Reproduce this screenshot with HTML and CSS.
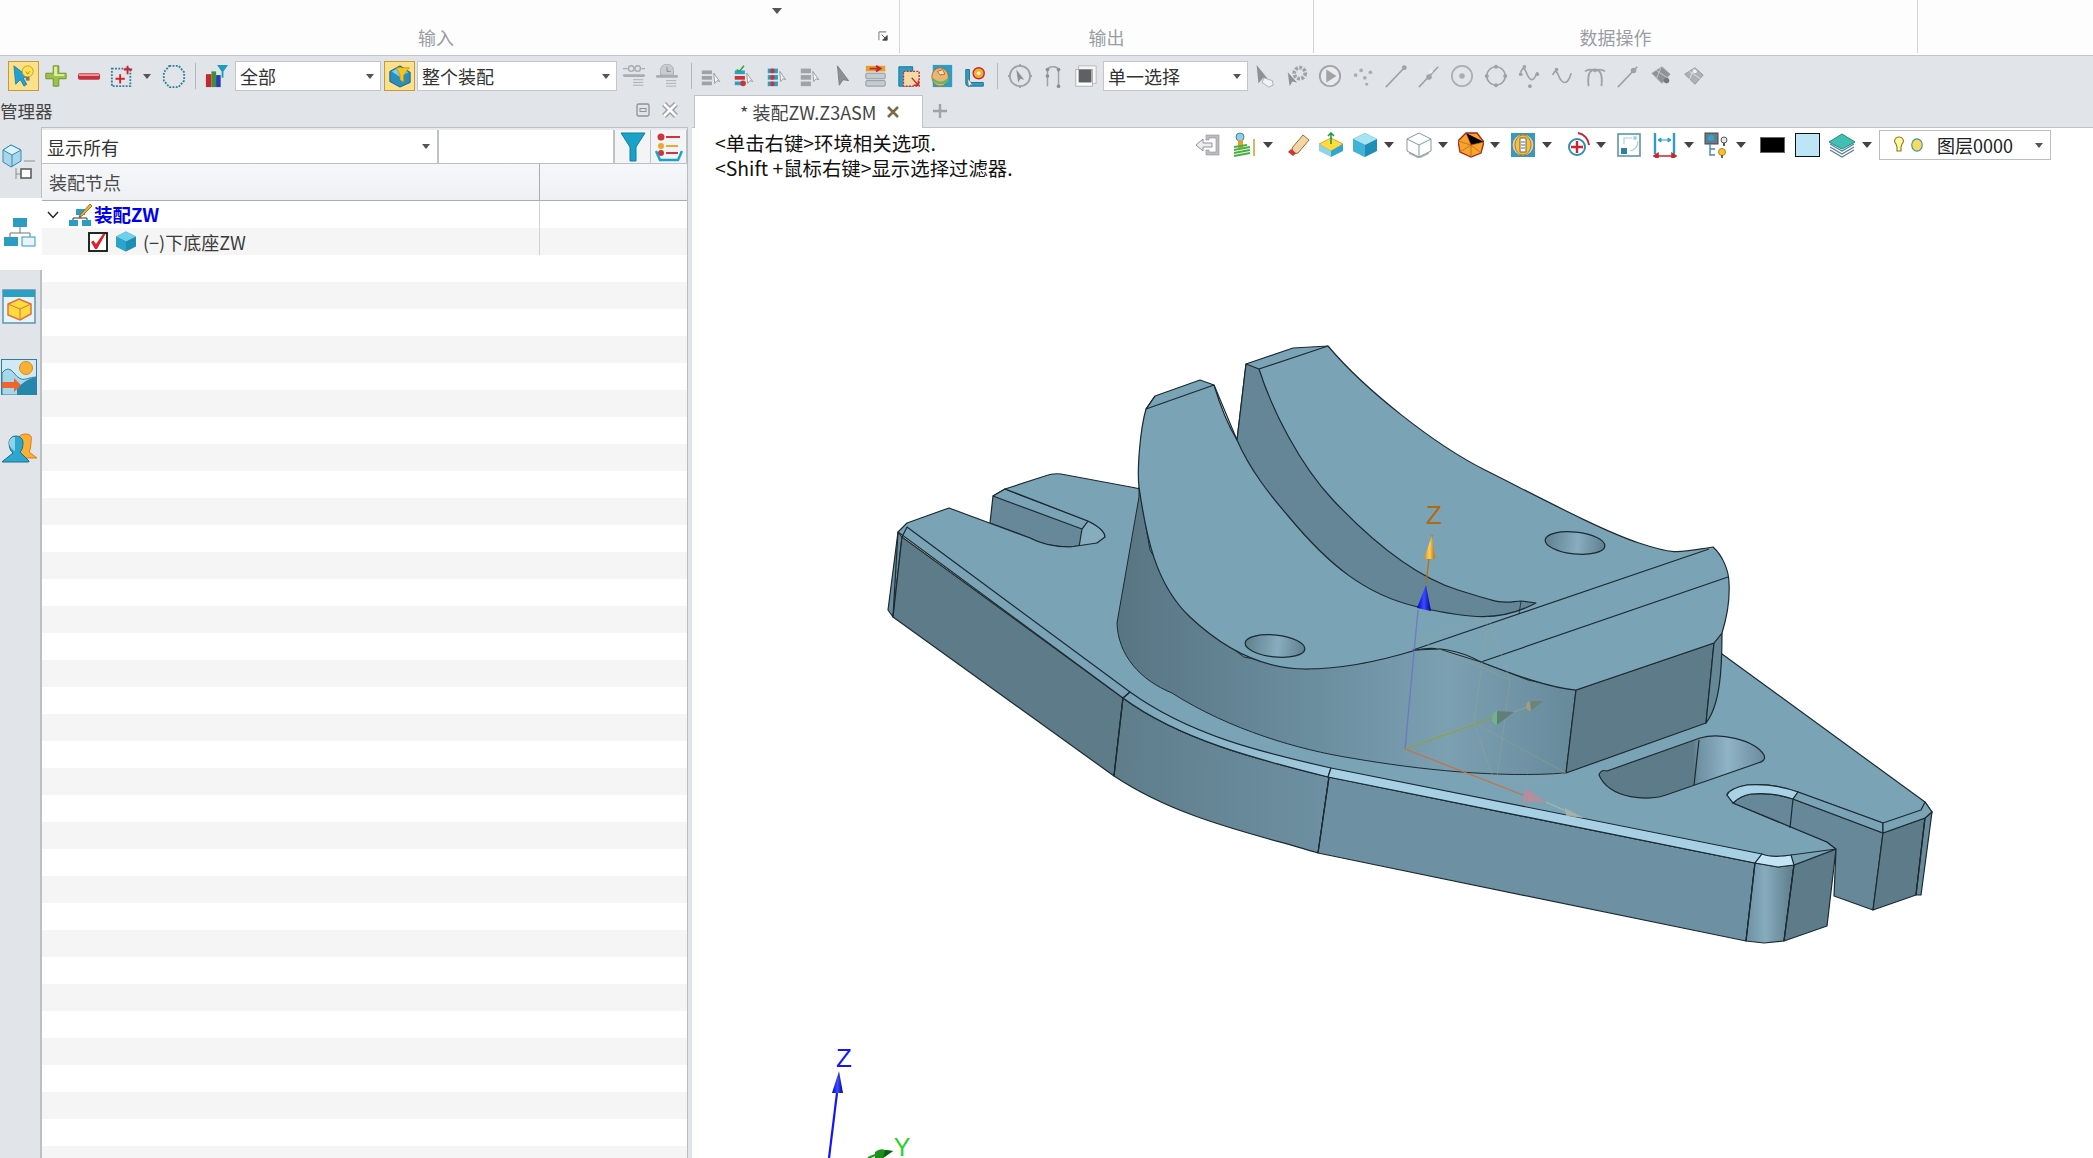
FILE: index.html
```html
<!DOCTYPE html>
<html lang="zh">
<head>
<meta charset="utf-8">
<title>装配ZW</title>
<link rel="stylesheet" href="styles.css">
</head>
<body>
<div class="app">
  <header class="ribbon">
    <section class="rb rb-in"><span class="rb-caret"></span><span class="rb-label">输入</span>
      <svg class="launcher" viewBox="0 0 12 12"><path d="M1 1h8M1 1v9" fill="none" stroke="#888" stroke-width="1.2"/><path d="M4 4l5 5M10 5v5H5z" fill="#444" stroke="#444"/></svg>
    </section>
    <section class="rb rb-out"><span class="rb-label">输出</span></section>
    <section class="rb rb-data"><span class="rb-label">数据操作</span></section>
  </header>

  <nav class="toolbar">
    <span class="hl"><svg class="ic" viewBox="0 0 26 26"><path d="M2 2l2 20 5-5 4 7 3-2-4-7 6-1z" fill="#1fa2d8" stroke="#0e6d99" stroke-width=".7"/><circle cx="17" cy="8" r="6" fill="#ffe25a" stroke="#c99a10"/><path d="M15 14h4v4h-4z" fill="#777"/><path d="M15 8l2 3 2-3" fill="none" stroke="#c27b12"/></svg></span>
    <span class="ti"><svg class="ic" viewBox="0 0 26 26"><path d="M10 2h6v8h8v6h-8v8h-6v-8H2v-6h8z" fill="#9cc24c" stroke="#6e8f2b" stroke-linejoin="round"/><path d="M11 3h3v8h8v2H11z" fill="#e3ef9f"/></svg></span>
    <span class="ti"><svg class="ic" viewBox="0 0 26 26"><rect x="1" y="10" width="24" height="7" rx="2" fill="#c3323c"/><rect x="2" y="11" width="22" height="2" fill="#ef9aa0"/></svg></span>
    <span class="ti"><svg class="ic" viewBox="0 0 26 26"><rect x="2" y="5" width="20" height="19" fill="none" stroke="#2b7f9e" stroke-width="2" stroke-dasharray="2 1.5"/><path d="M11 11v10M6 16h10M19 2v9M15 6h9" stroke="#d0222c" stroke-width="2"/></svg></span>
    <span class="tc"></span>
    <span class="ti ti-w"><svg class="ic" viewBox="0 0 26 26"><path d="M8 2h10l6 7v9l-6 7H8l-6-7V9z" fill="none" stroke="#2b7f9e" stroke-width="2" stroke-dasharray="2 1.5"/></svg></span>
    <span class="sep"></span>
    <span class="ti"><svg class="ic" viewBox="0 0 26 26"><rect x="1" y="11" width="6" height="14" fill="#c9252c"/><rect x="7" y="8" width="5" height="17" fill="#3e8f3c"/><rect x="12" y="12" width="5" height="13" fill="#2a3fb0"/><path d="M13 1h12l-5 7v7h-2V8z" fill="#1d9cc0"/></svg></span>
    <div class="combo c-all"><span>全部</span><i class="arr"></i></div>
    <span class="hl hl2"><svg class="ic" viewBox="0 0 26 26"><path d="M13 2l11 7v11l-11 5L2 19V8z" fill="#2a8fbd" stroke="#135f82"/><path d="M4 8l9-5 9 6-9 5z" fill="#7fd0ea"/><path d="M9 4h14l-6 8v8l-4-3v-5z" fill="#f7c61c" stroke="#b8860b" stroke-width=".7"/></svg></span>
    <div class="combo c-asm"><span>整个装配</span><i class="arr"></i></div>
    <span class="ti g"><svg class="ic" viewBox="0 0 26 26"><g fill="none" stroke="#a9adb1" stroke-width="1.6"><circle cx="10" cy="5" r="3"/><circle cx="17" cy="5" r="3"/><path d="M1 5h5M21 5h4"/></g><rect x="1" y="11" width="24" height="3" rx="1.5" fill="#a9adb1"/><path d="M12 17h11M12 20h11M12 23h11" stroke="#a9adb1"/></svg></span>
    <span class="ti g"><svg class="ic" viewBox="0 0 26 26"><path d="M6 12V7a7 7 0 0 1 14 0v5z" fill="#c9ccd0" stroke="#a9adb1"/><path d="M13 3v5h4" fill="none" stroke="#888"/><rect x="1" y="12" width="24" height="3" rx="1.5" fill="#a9adb1"/><path d="M12 18h11M12 21h11M12 24h11" stroke="#a9adb1"/></svg></span>
    <span class="sep sep-b"></span>
    <span class="ti"><svg class="ic" viewBox="0 0 26 26"><g fill="#9fa3a7"><rect x="3" y="7" width="11" height="4"/><rect x="3" y="13" width="11" height="4"/><rect x="3" y="19" width="11" height="4"/></g><path d="M16 10l1 11 2.500-3 3 1z" fill="#f4f5f6" stroke="#888" stroke-width=".8"/></svg></span>
    <span class="ti"><svg class="ic" viewBox="0 0 26 26"><rect x="3" y="7" width="11" height="4" fill="#2e9fc4"/><rect x="3" y="13" width="11" height="4" fill="#c9343b"/><rect x="3" y="19" width="11" height="4" fill="#2e9fc4"/><path d="M5 6l3 2 5-6" fill="none" stroke="#2f9e3e" stroke-width="1.600"/><circle cx="12" cy="21" r="3" fill="#c9343b"/><path d="M16 10l1 11 2.500-3 3 1z" fill="#f4f5f6" stroke="#888" stroke-width=".8"/></svg></span>
    <span class="ti"><svg class="ic" viewBox="0 0 26 26"><rect x="3" y="5" width="11" height="5" fill="#2e9fc4"/><rect x="3" y="12" width="11" height="5" fill="#2e9fc4"/><rect x="3" y="19" width="11" height="5" fill="#2e9fc4"/><circle cx="8" cy="7.500" r="2.500" fill="#c9343b"/><circle cx="8" cy="14.500" r="2.500" fill="#c9343b"/><circle cx="8" cy="21.500" r="2.500" fill="#c9343b"/><path d="M16 8l1 11 2.500-3 3 1z" fill="#f4f5f6" stroke="#888" stroke-width=".8"/></svg></span>
    <span class="ti"><svg class="ic" viewBox="0 0 26 26"><g fill="#9fa3a7"><rect x="3" y="5" width="11" height="5"/><rect x="3" y="12" width="11" height="5"/><rect x="3" y="19" width="11" height="5"/></g><path d="M16 8l1 11 2.500-3 3 1z" fill="#f4f5f6" stroke="#888" stroke-width=".8"/></svg></span>
    <span class="ti"><svg class="ic" viewBox="0 0 26 26"><path d="M7 2l2 21 4-6 6 1z" fill="#8d9195" stroke="#7b7f83"/></svg></span>
    <span class="ti"><svg class="ic" viewBox="0 0 26 26"><rect x="2" y="2" width="21" height="6" fill="#e2a12e"/><path d="M6 5h10M13 2l5 3-5 3" stroke="#c9252c" stroke-width="2" fill="none"/><rect x="2" y="10" width="21" height="6" rx="1" fill="#c4ccd0" stroke="#8c979c"/><rect x="2" y="18" width="21" height="6" rx="1" fill="#c4ccd0" stroke="#8c979c"/></svg></span>
    <span class="ti"><svg class="ic" viewBox="0 0 26 26"><path d="M2 3h15v21H2z" fill="#2c9ec6" stroke="#15708f"/><rect x="7" y="8" width="17" height="16" fill="#f2d9a6" stroke="#c9252c" stroke-dasharray="2 1.500" stroke-width="1.500"/><path d="M16 15l7 8M23 23v-5M23 23h-5" stroke="#c9252c" stroke-width="1.500" fill="none"/></svg></span>
    <span class="ti"><svg class="ic" viewBox="0 0 26 26"><rect x="3" y="1" width="21" height="24" fill="#2c9ec6"/><ellipse cx="11" cy="14" rx="9" ry="10" fill="#e9b676" stroke="#b4681f"/><path d="M3 15q8 8 17 0v4q-8 6-17 0z" fill="#62b86c"/><path d="M8 8l6-2 2 5-5 1z" fill="#f3e0bd" stroke="#b4681f"/></svg></span>
    <span class="ti"><svg class="ic" viewBox="0 0 26 26"><path d="M3 6h4v14h15v4H6q-3 0-3-3z" fill="#2c9ec6" stroke="#15708f"/><circle cx="17" cy="10" r="6" fill="#f0b133" stroke="#c9252c" stroke-width="1.500"/><circle cx="17" cy="10" r="2" fill="#fff3c4"/><path d="M5 15l1 10 2-2.500 2.500.5z" fill="#fff" stroke="#666" stroke-width=".7"/></svg></span>
    <span class="sep sep-c"></span>
    <span class="ti"><svg class="ic" viewBox="0 0 26 26"><circle cx="13" cy="13" r="11" fill="none" stroke="#9fa3a7" stroke-width="2"/><path d="M9 6l2 14 2.500-4 4 1z" fill="#8d9195"/><path d="M13 0v3M13 23v3M0 13h3M23 13h3" stroke="#9fa3a7" stroke-width="2"/></svg></span>
    <span class="ti"><svg class="ic" viewBox="0 0 26 26"><path d="M7 24V8q0-5 6-5t6 5v16" fill="none" stroke="#9fa3a7" stroke-width="1.600"/><g fill="#8d9195"><circle cx="7" cy="6" r="2"/><circle cx="19" cy="6" r="2"/><circle cx="19" cy="24" r="2"/><circle cx="7" cy="13" r="2"/></g></svg></span>
    <span class="ti"><svg class="ic" viewBox="0 0 26 26"><rect x="5" y="2" width="19" height="19" fill="#f4f5f6" stroke="#b5b8bb"/><rect x="2" y="6" width="18" height="18" fill="#fff" stroke="#a9adb1"/><rect x="5" y="6" width="14" height="14" fill="#5e6063"/></svg></span>
    <div class="combo c-sel"><span>单一选择</span><i class="arr"></i></div>
    <div class="tgroup">
      <span class="ti"><svg class="ic" viewBox="0 0 26 26"><path d="M5 1l2 20 5-6 5 1z" fill="#8d9195"/><path d="M13 15l9 3 1 5-5 2-7-5z" fill="#f1f2f3" stroke="#a9adb1"/></svg></span>
      <span class="ti"><svg class="ic" viewBox="0 0 26 26"><circle cx="16" cy="10" r="6" fill="none" stroke="#9fa3a7" stroke-width="4" stroke-dasharray="3 1.500"/><path d="M3 9l2 15 3-5 5 1z" fill="#8d9195"/></svg></span>
      <span class="ti"><svg class="ic" viewBox="0 0 26 26"><circle cx="13" cy="13" r="11" fill="#e8eaec" stroke="#9fa3a7" stroke-width="2"/><path d="M9 6v14l11-7z" fill="#9fa3a7"/></svg></span>
      <span class="ti"><svg class="ic" viewBox="0 0 26 26"><g fill="#a9adb1"><circle cx="5" cy="12" r="2"/><circle cx="11" cy="7" r="2"/><circle cx="15" cy="15" r="2"/><circle cx="21" cy="9" r="2"/><circle cx="17" cy="22" r="1.600"/></g></svg></span>
      <span class="ti"><svg class="ic" viewBox="0 0 26 26"><path d="M2 25L23 3" stroke="#9fa3a7" stroke-width="1.800"/><circle cx="22" cy="4" r="2.600" fill="#9fa3a7"/></svg></span>
      <span class="ti"><svg class="ic" viewBox="0 0 26 26"><path d="M2 25L23 3" stroke="#9fa3a7" stroke-width="1.800"/><circle cx="13" cy="14" r="3" fill="#9fa3a7"/><circle cx="15" cy="8" r="2" fill="#eee"/></svg></span>
      <span class="ti"><svg class="ic" viewBox="0 0 26 26"><circle cx="13" cy="13" r="11" fill="none" stroke="#a9adb1" stroke-width="1.800"/><circle cx="13" cy="13" r="3" fill="#a9adb1"/></svg></span>
      <span class="ti"><svg class="ic" viewBox="0 0 26 26"><circle cx="13" cy="13" r="10" fill="none" stroke="#9fa3a7" stroke-width="1.800"/><g fill="#9fa3a7"><circle cx="13" cy="3" r="2.200"/><circle cx="13" cy="23" r="2.200"/><circle cx="3" cy="13" r="2.200"/><circle cx="23" cy="13" r="2.200"/></g></svg></span>
      <span class="ti"><svg class="ic" viewBox="0 0 26 26"><path d="M4 9q3-8 6 0t6 8 6-8" fill="none" stroke="#9fa3a7" stroke-width="1.800"/><g fill="#9fa3a7"><circle cx="4" cy="11" r="2"/><circle cx="8" cy="3" r="2"/><circle cx="22" cy="11" r="2"/><circle cx="14" cy="24" r="2"/></g></svg></span>
      <span class="ti"><svg class="ic" viewBox="0 0 26 26"><path d="M3 12q3-8 6 0t7 8 7-10" fill="none" stroke="#9fa3a7" stroke-width="1.800"/><circle cx="7" cy="6" r="2" fill="#9fa3a7"/></svg></span>
      <span class="ti"><svg class="ic" viewBox="0 0 26 26"><path d="M6 24Q4 6 13 6t7 18" fill="none" stroke="#9fa3a7" stroke-width="2"/><path d="M2 8q6-4 11 0 5-4 11 0" fill="none" stroke="#9fa3a7" stroke-width="1.800"/></svg></span>
      <span class="ti"><svg class="ic" viewBox="0 0 26 26"><path d="M2 25L23 3" stroke="#9fa3a7" stroke-width="1.800"/><circle cx="19" cy="7" r="3" fill="#9fa3a7"/></svg></span>
      <span class="ti"><svg class="ic" viewBox="0 0 26 26"><path d="M3 10l11-7 9 8-9 10z" fill="#8f9396" stroke="#a9adb1"/><path d="M8 7l12 8M13 4l-5 12" stroke="#ccc"/><circle cx="19" cy="18" r="3" fill="#777"/></svg></span>
      <span class="ti"><svg class="ic" viewBox="0 0 26 26"><path d="M3 11l11-7 9 8-9 10z" fill="#aeb2b5" stroke="#93979a"/><path d="M8 8l12 8M13 5l-5 12" stroke="#e2e2e2"/><circle cx="14" cy="8" r="2" fill="#f1f1f1"/></svg></span>
    </div>
  </nav>

  <div class="main">
    <aside class="manager">
      <div class="m-head"><span class="m-title">管理器</span>
        <svg class="m-btn" viewBox="0 0 14 14"><rect x="1" y="1" width="12" height="12" rx="1.500" fill="none" stroke="#8e9297" stroke-width="1.300"/><rect x="4" y="5.500" width="6" height="3" fill="none" stroke="#8e9297"/></svg>
        <svg class="m-x" viewBox="0 0 18 18"><path d="M3 3l12 12M15 3L3 15" stroke="#9a9ea3" stroke-width="5.500"/><path d="M3 3l12 12M15 3L3 15" stroke="#fff" stroke-width="2.600"/></svg>
      </div>
      <div class="m-body">
        <div class="sidetabs">
          <button class="st st1"><svg viewBox="0 0 34 36" width="34" height="36"><path d="M9 2l10 5v11l-10 6-8-5V7z" fill="#a9d6ea" stroke="#2e8fb5"/><path d="M9 2l10 5-9 5-9-5z" fill="#dff1f8" stroke="#2e8fb5"/><path d="M10 12v12" stroke="#2e8fb5"/><path d="M22 18h11M14 25v12M14 31h5" fill="none" stroke="#8a8f94"/><rect x="19" y="26" width="10" height="9" fill="#fff" stroke="#555" stroke-width="1.500"/></svg></button>
          <button class="st st2"><svg viewBox="0 0 32 30" width="32" height="30"><rect x="9" y="1" width="14" height="9" fill="#2b9cc2"/><path d="M16 10v6M6 20v-4h20v4" fill="none" stroke="#6e7276"/><rect x="0" y="20" width="14" height="9" fill="#2b9cc2"/><rect x="18" y="20" width="13" height="9" fill="#e9f5fa" stroke="#2b9cc2"/></svg></button>
          <button class="st st3"><svg viewBox="0 0 34 35" width="34" height="35"><rect x="1" y="1" width="32" height="33" fill="#e4f4fb" stroke="#5d95b0" stroke-width="1.500"/><rect x="1" y="1" width="32" height="7" fill="#2d9dc4"/><path d="M17 10l12 5v10l-11 6-12-5V15z" fill="#ffdc3e" stroke="#e2703b" stroke-width="1.500"/><path d="M6 15l12 5 11-5M18 20v11" fill="none" stroke="#e2703b"/></svg></button>
          <button class="st st4"><svg viewBox="0 0 36 36" width="36" height="36"><rect x="0.500" y="0.500" width="35" height="35" fill="#cfeaf5" stroke="#2c7fa0"/><circle cx="25" cy="9" r="6.500" fill="#f8b133" stroke="#d98a1b"/><path d="M1 14q6-8 12 0t12 6 10-2v18H1z" fill="#a5d8ea" stroke="#3f7f9c"/><path d="M16 30q8-10 19-12v18H16z" fill="#2487ab"/><path d="M1 23h12v-4l7 7-7 7v-4H1z" fill="#f0642e"/></svg></button>
          <button class="st st5"><svg viewBox="0 0 36 30" width="36" height="30"><path d="M17 6q1-5 8-5t5 8q0 7-2 10l8 6H18z" fill="#f8b133" stroke="#e07a1e"/><path d="M8 9q1-6 7-6t7 6q0 8-3 10l9 9q1 1-2 1H2q-2 0 0-1l10-8q-4-3-4-11z" fill="#2da7cf" stroke="#1c6e8d"/><path d="M8 9q1-5 6-5v14q-6-3-6-9z" fill="#8fd3e9"/></svg></button>
        </div>
        <div class="panel">
          <div class="p-filter">
            <div class="f-combo"><span>显示所有</span><i class="arr"></i></div>
            <div class="f-input"></div>
            <div class="f-btn"><svg viewBox="0 0 26 30" width="26" height="30"><path d="M1 1h24L16 15v14h-6V15z" fill="#1aa3c8" stroke="#0f7f9f"/></svg></div>
            <div class="f-btn"><svg viewBox="0 0 28 30" width="28" height="30"><circle cx="6" cy="5" r="3.500" fill="#d0343c"/><path d="M11 5h14" stroke="#d0343c" stroke-width="2"/><circle cx="6" cy="14" r="3" fill="#eda92b"/><path d="M11 14h12" stroke="#eda92b" stroke-width="2"/><circle cx="6" cy="21" r="3" fill="#d0343c"/><path d="M11 21h12" stroke="#d0343c" stroke-width="2"/><path d="M1 19l4 9h18l4-9" fill="none" stroke="#1aa3c8" stroke-width="2.500"/></svg></div>
          </div>
          <div class="p-head"><div class="col-a">装配节点</div><div class="col-b"></div></div>
          <div class="tree">
            <div class="row">
              <div class="col-a r1">
                <svg class="chev" viewBox="0 0 12 8"><path d="M1 1l5 5.500L11 1" fill="none" stroke="#222" stroke-width="1.400"/></svg>
                <svg class="ti-asm" viewBox="0 0 24 24"><rect x="8" y="6" width="9" height="6" fill="#2b9cc2"/><rect x="1" y="17" width="9" height="6" fill="#2b9cc2"/><rect x="14" y="17" width="9" height="6" fill="#2b9cc2"/><path d="M12 12v3M5 17v-2h14v2" fill="none" stroke="#333"/><path d="M22 1l-9 10-2 3 3-1 10-10z" fill="#f0b133" stroke="#8a5a12" stroke-width=".8"/></svg>
                <b class="n-root">装配ZW</b>
              </div><div class="col-b"></div>
            </div>
            <div class="row">
              <div class="col-a r2">
                <svg class="chk" viewBox="0 0 20 20"><rect x="1" y="1" width="18" height="18" fill="#fff" stroke="#111" stroke-width="1.800"/><path d="M3 10l2.500-1.500L8 12l7-10h2.500L9 17H7z" fill="#e01f26"/></svg>
                <svg class="cube" viewBox="0 0 22 22"><path d="M11 1l10 5v10l-10 5L1 16V6z" fill="#1f8db4"/><path d="M11 1l10 5-10 5L1 6z" fill="#6fd0ec"/><path d="M1 6l10 5v10L1 16z" fill="#2ba5cc"/></svg>
                <span class="n-child">(−)下底座ZW</span>
              </div><div class="col-b"></div>
            </div>
          </div>
        </div>
      </div>
    </aside>

    <main class="view">
      <div class="tabbar">
        <div class="tab"><span>* 装配ZW.Z3ASM</span><svg class="tab-x" viewBox="0 0 14 14"><path d="M2 2l10 10M12 2L2 12" stroke="#7a6a4a" stroke-width="2.600"/></svg></div>
        <svg class="tab-add" viewBox="0 0 16 16"><path d="M8 1v14M1 8h14" stroke="#a0a4a8" stroke-width="2.400"/></svg>
      </div>
      <div class="canvas">
        <svg class="model" viewBox="692 128 1401 1030" width="1401" height="1030">
          <defs>
            <linearGradient id="gWall" x1="1117" x2="1576" y1="0" y2="0" gradientUnits="userSpaceOnUse"><stop offset="0" stop-color="#587583"/><stop offset=".45" stop-color="#6c8fa0"/><stop offset=".72" stop-color="#7ba0b2"/><stop offset="1" stop-color="#678a9b"/></linearGradient>
            <linearGradient id="gFace2" x1="1114" x2="1329" y1="0" y2="0" gradientUnits="userSpaceOnUse"><stop offset="0" stop-color="#5f7d8b"/><stop offset="1" stop-color="#6d90a2"/></linearGradient>
            <linearGradient id="gBand" x1="1130" x2="1340" y1="0" y2="0" gradientUnits="userSpaceOnUse"><stop offset="0" stop-color="#7ba3b6"/><stop offset="1" stop-color="#a8d0e4"/></linearGradient>
            <linearGradient id="gFil" x1="1746" x2="1794" y1="0" y2="0" gradientUnits="userSpaceOnUse"><stop offset="0" stop-color="#6d90a2"/><stop offset=".4" stop-color="#86acbe"/><stop offset="1" stop-color="#5e7b89"/></linearGradient>
            <linearGradient id="gHole"><stop offset="0" stop-color="#60808f"/><stop offset=".55" stop-color="#88adbe"/><stop offset="1" stop-color="#5f7f8e"/></linearGradient>
            <linearGradient id="gSlot" x1="1599" x2="1764" y1="0" y2="0" gradientUnits="userSpaceOnUse"><stop offset="0" stop-color="#5e7b89"/><stop offset=".57" stop-color="#5e7b89"/><stop offset=".6" stop-color="#6d90a2"/><stop offset=".78" stop-color="#8fb4c6"/><stop offset="1" stop-color="#6a8d9e"/></linearGradient>
            <linearGradient id="gArrow" x1="0" x2="1" y1="0" y2="0"><stop offset="0" stop-color="#d88a10"/><stop offset=".5" stop-color="#ffd060"/><stop offset="1" stop-color="#b87008"/></linearGradient>
            <linearGradient id="gBlue" x1="0" x2="1" y1="0" y2="0"><stop offset="0" stop-color="#0000c8"/><stop offset=".5" stop-color="#3a4cff"/><stop offset="1" stop-color="#000090"/></linearGradient>
          </defs>
          <g stroke="#1b2a31" stroke-width="1.200" stroke-linejoin="round" fill="none">
            <path d="M990 523L993 496 1005 489 1088 521 1105 537 1097 543 1070 547C1055 547 1040 544 1030 538z" fill="#668898"/>
            <path d="M1082 529L1088 521C1098 526 1105 531 1105 537 1103 542 1090 547 1079 547z" fill="#86acbd"/>
            <path d="M993 496L1005 489 1088 521 1082 529z" fill="#7ba3b6"/>
            <path d="M888 610L898 532 902 537 893 617z" fill="#6a8b9a"/>
            <path d="M902 537L1123 698 1114 776 893 617z" fill="#5e7b89"/>
            <path d="M1123 698C1180 740 1260 760 1329 777L1318 853C1260 835 1180 820 1114 776z" fill="url(#gFace2)"/>
            <path d="M1329 777L1755 863 1746 941 1318 853z" fill="#6d90a2"/>
            <path d="M1755 863L1778 867 1794 865 1784 941 1764 943 1746 941z" fill="url(#gFil)"/>
            <path d="M1794 865L1836 849 1827 926 1784 941z" fill="#5e7b89"/>
            <path d="M898 532L907 523 949 508 1030 538C1045 546 1060 547 1070 547L1097 543 1105 537C1105 531 1098 526 1088 521L1005 489 1045 476Q1053 473 1061 474L1136 488 1722 654 1925 802 1932 812 1925 818 1883 833 1883 823 1798 792Q1773 783 1747 785 1727 790 1727 795L1733 803 1827 842 1836 849 1794 865 1755 863 1329 777C1260 760 1180 740 1123 698z" fill="#7ba3b6"/>
            <path d="M1733 803Q1740 796 1751 794 1773 792 1793 799L1883 833 1873 910 1834 896 1836 849 1827 842z" fill="#668898"/>
            <path d="M1793 799L1790 828" />
            <path d="M1727 795Q1730 788 1747 785 1773 783 1798 792L1793 799Q1773 792 1751 794 1740 796 1733 803z" fill="#a9d2e6"/>
            <path d="M1798 792L1883 823 1883 833 1793 799z" fill="#7ba3b6"/>
            <path d="M1883 833L1925 818 1916 895 1873 910z" fill="#5e7b89"/>
            <path d="M1925 818L1932 812 1921 895 1916 895z" fill="#6a8b9a"/>
            <path d="M1883 823L1921 810 1925 802 1932 812 1925 818 1883 833z" fill="#7ba3b6"/>
            <path d="M1130 692C1190 735 1260 752 1331 768L1328 777C1260 760 1180 740 1123 698z" fill="url(#gBand)"/>
            <path d="M1331 768L1762 854 1755 863 1328 777z" fill="#a8d0e4"/>
            <path d="M1762 854Q1772 858 1791 855L1794 865 1778 867 1755 863z" fill="#c4e4f4"/>
            <path d="M1791 855L1836 849" />
            <path d="M907 527L1130 692M902 537L907 527M1123 698L1130 692" />
            <path d="M1599 775Q1601 769 1607 771L1700 738C1720 732 1755 740 1764 755 1766 760 1762 762 1758 763L1666 795C1650 801 1610 800 1599 775z" fill="url(#gSlot)"/>
            <path d="M1699 740L1694 785" />
            <path d="M1139 497L1117 623C1118 655 1140 680 1172 693 1230 730 1300 750 1351 758 1420 770 1500 778 1566 773L1576 690 1528 680 1481 662 1439 649 1416 650 1364 663 1306 669 1244 657 1190 617 1150 550 1139 487z" fill="url(#gWall)" stroke-width="1"/>
            <path d="M1576 690L1714 643 1706 723 1566 773z" fill="#5e7b89"/>
            <path d="M1714 643L1722 633C1722 670 1720 705 1706 723z" fill="#658796"/>
            <path d="M1146 409L1155 396 1200 380 1214 385C1220 405 1228 425 1237 440L1246 364 1293 348 1328 346C1365 390 1435 445 1485 470S1600 530 1639 543 1680 552 1713 547C1722 555 1729 570 1729 583 1730 600 1726 620 1722 633L1714 643 1576 690C1550 688 1515 675 1481 662 1460 650 1435 646 1416 650 1390 658 1350 669 1306 669S1225 650 1190 617 1146 535 1139 487C1137 470 1140 430 1146 409z" fill="#7ba3b6"/>
            <path d="M1246 364L1259 369C1272 410 1300 465 1333 500S1410 575 1458 590 1500 603 1521 601L1536 603C1500 622 1471 619 1418 607S1328 564 1289 517C1270 495 1250 470 1237 440z" fill="#648696"/>
            <path d="M1214 385L1237 440" /><path d="M1521 601L1519 614" stroke-width=".8"/>
            <path d="M1155 396L1146 409 1214 385M1259 369L1328 346" />
            <path d="M1709 549L1413 650M1728 577L1481 662" />
            <ellipse cx="1275" cy="646" rx="30" ry="11" fill="url(#gHole)" transform="rotate(6 1275 646)"/>
            <ellipse cx="1575" cy="543" rx="30" ry="11" fill="url(#gHole)" transform="rotate(6 1575 543)"/>
            <path d="M1123 698L1114 776M1329 777L1318 853M898 532L893 617" />
            <path d="M1755 863L1746 941M1794 865L1784 941" />
            <path d="M1925 818L1916 895" />
          </g>
          <g fill="none" stroke="#9aa489" stroke-width=".8" opacity=".6">
            <path d="M1418 640L1488 617 1474 723 1405 749M1488 617L1510 680 1496 786 1474 723M1510 680L1418 640M1496 786L1566 773 1474 723"/>
          </g>
          <g fill="none" stroke-width="1.300">
            <path d="M1405 749L1418 610" stroke="#6a70c4" opacity=".8"/>
            <path d="M1405 749L1492 718" stroke="#8f9f40"/>
            <path d="M1405 749L1523 795" stroke="#c87048"/>
            <path d="M1546 802L1568 812" stroke="#a9b6a8"/>
            <path d="M1426 583L1432 535" stroke="#b96d10"/>
            <path d="M1497 718L1530 706" stroke="#8aa088"/>
          </g>
          <path d="M1526 788L1546 802 1522 802z" fill="#b98c9a" opacity=".9"/>
          <path d="M1565 808L1584 818 1566 816z" fill="#a7b4a7" opacity=".9"/>
          <ellipse cx="1497" cy="718" rx="5" ry="7" fill="#6fb48c"/>
          <path d="M1497 711L1514 712 1497 725z" fill="#617f78"/>
          <ellipse cx="1530" cy="706" rx="4" ry="5" fill="#9d9d84"/>
          <path d="M1530 701L1543 701 1531 711z" fill="#6e8378"/>
          <path d="M1426 585L1417 608 1431 611z" fill="url(#gBlue)"/>
          <path d="M1432 535L1424 559 1435 559z" fill="url(#gArrow)"/>
          <text class="z-org" x="1434" y="524">Z</text>
          <path d="M829 1158L837 1093" stroke="#1414ff" stroke-width="2.200"/>
          <path d="M839 1071L832 1093 843 1093z" fill="url(#gBlue)"/>
          <text class="z-tri" x="844" y="1067">Z</text>
          <path d="M868 1158L880 1153" stroke="#18a018" stroke-width="2.200"/>
          <path d="M875 1152Q880 1148 885 1150L893 1151 883 1158 875 1158z" fill="#1d8f1d"/>
          <path d="M885 1150L893 1151 883 1158z" fill="#0d5f0d"/>
          <text class="y-tri" x="902" y="1156">Y</text>
        </svg>
        <div class="hint"><p>&lt;单击右键&gt;环境相关选项.</p><p>&lt;Shift +鼠标右键&gt;显示选择过滤器.</p></div>
        <div class="vbar">
          <svg class="vi" viewBox="0 0 26 26"><path d="M11 3h13v20H11v-5h3v2h7V6h-7v2h-3z" fill="#b9bcc0" stroke="#9a9ea2" stroke-width=".7"/><path d="M1 13l7-6v4h9v4H8v4z" fill="#eceef0" stroke="#8e9297"/></svg>
          <svg class="vi m10" viewBox="0 0 26 26"><circle cx="9" cy="5" r="4" fill="#8fd0e8" stroke="#3f86a4"/><rect x="7" y="8" width="5" height="8" fill="#e2a12e"/><path d="M3 15l13-2M3 18l16-3M3 21l16-3M3 24l16-3" stroke="#48b040" stroke-width="1.800"/><path d="M23 7v17" stroke="#d39a2a" stroke-width="1.500"/></svg>
          <i class="arr c"></i>
          <svg class="vi m13" viewBox="0 0 26 26"><path d="M6 16L17 3l6 5-11 13-4 1z" fill="#f2d6a6" stroke="#9a6a2a"/><path d="M5 17l5 4-3 3-5-4z" fill="#d0343c"/></svg>
          <svg class="vi m6" viewBox="0 0 26 26"><path d="M13 6l12 6-12 7L1 12z" fill="#ffdc3e" stroke="#e2a12e"/><path d="M1 12l12 7v6L1 19z" fill="#8fd3e9"/><path d="M25 12l-12 7v6l12-6z" fill="#2da7cf"/><path d="M13 12V1M10 4l3-3 3 3" fill="none" stroke="#1f9e3e" stroke-width="1.600"/></svg>
          <svg class="vi m8" viewBox="0 0 26 26"><path d="M13 1l12 6v12l-12 6-12-6V7z" fill="#1f8db4"/><path d="M13 1l12 6-12 6L1 7z" fill="#a6e3f3"/><path d="M1 7l12 6v12L1 19z" fill="#40b3d6"/></svg>
          <i class="arr c"></i>
          <svg class="vi m12" viewBox="0 0 26 26"><path d="M13 1l12 6v12l-12 6-12-6V7z" fill="#fff" stroke="#7f9aa8"/><path d="M1 7l12 6 12-6M13 13v12" fill="none" stroke="#7f9aa8"/><path d="M3 21l10 5 10-5" fill="none" stroke="#888" stroke-width="1.500" opacity=".6"/></svg>
          <i class="arr c"></i>
          <svg class="vi m10" viewBox="0 0 26 26"><path d="M8 1h11l7 9-3 11-10 4-11-5-2-11z" fill="#f4a52a" stroke="#a9251c" stroke-width="1.300"/><path d="M8 1l5 12 13-3M13 13v12M13 13L0 9M13 13l-11 7M13 13l10 8" stroke="#c2591c" stroke-width=".7"/></svg>
          <i class="arr c"></i>
          <svg class="vi m10" viewBox="0 0 26 26"><rect x="1" y="1" width="24" height="24" fill="#2c9ec6"/><circle cx="13" cy="13" r="11" fill="#c7cdd0" stroke="#777"/><ellipse cx="13" cy="13" rx="8" ry="10" fill="#f4c233" stroke="#a9851f"/><path d="M10 6h6v14h-6z" fill="#fff" stroke="#666"/><path d="M11 10h4M11 13h4M11 16h4" stroke="#666"/></svg>
          <i class="arr c"></i>
          <svg class="vi m12" viewBox="0 0 26 26"><circle cx="13" cy="15" r="8" fill="none" stroke="#2c8fb5" stroke-width="2"/><path d="M14 1a13 13 0 0 1 11 12" stroke="#c9252c" fill="none" stroke-width="2"/><path d="M13 9v12M7 15h12" stroke="#d0222c" stroke-width="2.400"/></svg>
          <i class="arr c"></i>
          <svg class="vi m10" viewBox="0 0 26 26"><rect x="2" y="2" width="22" height="22" fill="#fff" stroke="#5e94ad" stroke-width="1.600"/><rect x="5" y="16" width="6" height="6" fill="#2c7fa5"/><path d="M8 12V6h8M22 9q0 8-8 10" fill="none" stroke="#9ed5ea" stroke-width="1.200"/><circle cx="19" cy="6" r="2" fill="#9ed5ea"/></svg>
          <svg class="vi m10" viewBox="0 0 26 26"><path d="M3 1v21M22 1v21" stroke="#2c9ec6" stroke-width="2.400"/><path d="M6 8h13M6 8l3-2v4zM19 8l-3-2v4z" stroke="#2c9ec6" fill="#2c9ec6"/><path d="M2 24h22M2 24l4-2.500v5zM24 24l-4-2.500v5z" stroke="#c9252c" fill="#c9252c" stroke-width="1.600"/></svg>
          <i class="arr c"></i>
          <svg class="vi m10" viewBox="0 0 26 26"><rect x="1" y="1" width="13" height="11" fill="#6a7a86" stroke="#3a4a55"/><circle cx="7" cy="6" r="3" fill="#2da7cf"/><path d="M6 12v11h5M6 17h5" fill="none" stroke="#4a88a8" stroke-width="1.400"/><circle cx="20" cy="8" r="3" fill="#e6e8ea" stroke="#555"/><rect x="19" y="11" width="2" height="3" fill="#555"/><circle cx="18" cy="20" r="3.500" fill="#f4c233" stroke="#b8860b"/><rect x="17" y="23" width="2" height="3" fill="#666"/></svg>
          <i class="arr c"></i>
          <span class="swatch sw-k"></span>
          <span class="swatch sw-b"></span>
          <svg class="vi m9" viewBox="0 0 26 26"><path d="M13 2l13 8-13 7L0 10z" fill="#41c0b2" stroke="#1d8c80"/><path d="M1 12l12 7 12-7M1 15l12 7 12-7M1 18l12 7 12-7" fill="none" stroke="#5a7f95" stroke-width="1.300"/></svg>
          <i class="arr c c7"></i>
          <div class="layer">
            <svg class="bulb" viewBox="0 0 10 18"><path d="M5 1a4 4 0 0 1 3 7l-1 3v4H3v-4L2 8a4 4 0 0 1 3-7z" fill="#fff6a8" stroke="#8a7a10" stroke-width="1.100"/></svg>
            <svg class="sun" viewBox="0 0 16 18"><ellipse cx="8" cy="9" rx="6" ry="7" fill="#f6dc5a" stroke="#3f8fb0" stroke-width="1.300"/></svg>
            <span>图层0000</span><i class="arr"></i>
          </div>
        </div>
      </div>
    </main>
  </div>
</div>
</body>
</html>
```

FILE: styles.css
```css
* { box-sizing: border-box; }
html, body { margin: 0; height: 100%; overflow: hidden; }
body { font-family: "Noto Sans CJK SC", "Noto Sans", sans-serif; color: #333; background: #e1e4e8; }
svg { display: block; flex: none; }
.app { width: 2093px; height: 1158px; display: flex; flex-direction: column; }

/* ribbon */
.ribbon { height: 56px; display: flex; background: #fdfdfd; border-bottom: 1px solid #c3c6c9; }
.rb { position: relative; display: flex; justify-content: center; align-items: flex-end; padding-bottom: 4px; height: 53px; border-right: 1px solid #d3d5d8; }
.rb-in { width: 900px; justify-content: flex-start; padding-left: 418px; }
.rb-out { width: 414px; }
.rb-data { width: 604px; }
.rb-label { font-size: 18px; line-height: 24px; color: #9a9da3; }
.rb-caret { position: absolute; left: 772px; top: 8px; border: 5px solid transparent; border-top: 6px solid #555; border-bottom: 0; }
.launcher { position: absolute; left: 878px; top: 31px; width: 11px; height: 11px; }

/* toolbar */
.toolbar { height: 37px; padding: 5px 0 0 8px; display: flex; align-items: flex-start; background: #e1e4e8; }
.hl { width: 31px; height: 30px; display: flex; align-items: center; justify-content: center; background: #fde08a; border: 1px solid #c69a3c; flex: none; }
.hl2 { margin-left: 3px; }
.ti { width: 33px; height: 30px; display: flex; align-items: center; justify-content: center; flex: none; }
.ti-w { width: 36px; }
.ic { width: 24px; height: 24px; }
.tc { width: 18px; height: 30px; flex: none; position: relative; }
.tc::after { content: ""; position: absolute; left: 5px; top: 13px; border: 4px solid transparent; border-top: 5px solid #555; border-bottom: 0; }
.sep { width: 8px; height: 30px; flex: none; position: relative; }
.sep::after { content: ""; position: absolute; left: 3px; top: 2px; width: 1px; height: 26px; background: #b4b8bc; }
.sep-b { width: 11px; }
.sep-b::after { left: 8px; }
.sep-c { width: 12px; }
.sep-c::after { left: 6px; }
.combo { height: 30px; background: #fff; border: 1px solid #c3c7cb; display: flex; align-items: center; justify-content: space-between; padding: 0 6px 0 4px; font-size: 18px; line-height: 1; flex: none; }
.c-all { width: 146px; margin-left: 2px; }
.c-asm { width: 200px; margin-left: 2px; }
.c-sel { width: 145px; margin-left: 1px; }
.arr { display: block; flex: none; width: 0; height: 0; border: 4px solid transparent; border-top: 5px solid #555; border-bottom: 0; }
.tgroup { display: grid; grid-auto-flow: column; grid-auto-columns: 33.15px; flex: none; }
.tgroup .ti { width: auto; }
.c-sel + .tgroup { margin-left: -1px; }

/* main */
.main { flex: 1; display: flex; min-height: 0; }
.manager { width: 692px; display: flex; flex-direction: column; background: #e1e4e8; flex: none; }
.m-head { height: 34px; display: flex; align-items: center; flex: none; }
.m-title { font-size: 17.500px; color: #444; flex: 1; }
.m-btn { width: 14px; height: 14px; margin-right: 11px; }
.m-x { width: 18px; height: 18px; margin-right: 13px; }
.m-body { flex: 1; display: flex; min-height: 0; }

.sidetabs { width: 42px; flex: none; display: flex; flex-direction: column; }
.st { display: flex; justify-content: center; align-items: flex-start; border: 0; padding: 0; background: none; width: 42px; }
.st svg { margin-left: -3px; }
.st1 { height: 71px; padding-top: 16px; border-right: 1px solid #bcc0c4; }
.st2 { height: 72px; background: #fff; padding-top: 19px; }
.st3 { height: 71px; padding-top: 19px; border-right: 2px solid #bcc0c4; }
.st4 { height: 74px; padding-top: 18px; border-right: 2px solid #bcc0c4; }
.st5 { flex: 1; padding-top: 18px; border-right: 2px solid #bcc0c4; }

.panel { width: 646px; display: flex; flex-direction: column; background: #fff; border-right: 1px solid #b8bcc0; }
.p-filter { height: 36px; display: flex; background: #e8eaed; border-top: 1px solid #bcc0c4; padding-top: 2px; }
.f-combo { width: 397px; background: #fff; border-right: 2px solid #bfc3c7; display: flex; align-items: center; justify-content: space-between; padding: 0 7px 0 5px; font-size: 18px; }
.f-input { width: 176px; background: #fff; border-right: 2px solid #bfc3c7; }
.f-btn { width: 36px; display: flex; align-items: center; justify-content: center; background: #f3f4f6; border-right: 1px solid #bfc3c7; }
.p-head { height: 38px; display: flex; background: linear-gradient(#f6f7f9, #eef0f4); border-top: 1px solid #bcc0c4; border-bottom: 1px solid #a9adb3; font-size: 18px; color: #4a4a4a; }
.p-head .col-a { padding-left: 7px; display: flex; align-items: center; border-right: 1px solid #a9adb3; }
.col-a { width: 498px; flex: none; }
.col-b { flex: 1; }
.tree { flex: 1; background: repeating-linear-gradient(#fff 0 27px, #f5f5f5 27px 54px); }
.row { height: 27px; display: flex; }
.row .col-a { border-right: 1px solid #cfd2d5; display: flex; align-items: center; }
.r1 { padding-left: 5px; }
.chev { width: 12px; height: 8px; margin-right: 9px; }
.ti-asm { width: 24px; height: 24px; margin-right: 2px; }
.n-root { color: #0000ee; font-size: 18.500px; font-weight: 700; line-height: 1; }
.r2 { padding-left: 46px; }
.chk { width: 20px; height: 20px; margin-right: 7px; }
.cube { width: 22px; height: 23px; margin-right: 6px; }
.n-child { font-size: 18px; color: #3a3a3a; line-height: 1; }

/* view */
.view { flex: 1; min-width: 0; display: flex; flex-direction: column; }
.tabbar { height: 35px; display: flex; align-items: flex-end; flex: none; border-bottom: 1px solid #c0c4c8; }
.tab { width: 229px; height: 33px; margin-left: 2px; margin-bottom: -1px; display: flex; align-items: center; background: #fff; border: 1px solid #c0c4c8; border-bottom: 0; padding-left: 45px; font-size: 18px; color: #444; }
.tab-x { width: 14px; height: 14px; margin-left: 10px; }
.tab-add { width: 16px; height: 16px; margin: 0 0 8px 9px; }
.canvas { flex: 1; position: relative; background: #fff; overflow: hidden; }
.model { position: absolute; left: 0; top: 0; }
.z-org { font: 26px "Liberation Sans", sans-serif; fill: #b06a10; text-anchor: middle; }
.z-tri { font: 26px "Liberation Sans", sans-serif; fill: #1414ff; text-anchor: middle; }
.y-tri { font: 25px "Liberation Sans", sans-serif; fill: #2ccf2c; text-anchor: middle; }
.hint { position: absolute; left: 23px; top: 2px; font-size: 19.400px; line-height: 25px; color: #111; }
.hint p { margin: 0; }
.vbar { position: absolute; left: 503px; top: 2px; display: flex; align-items: center; height: 30px; }
.vi { width: 26px; height: 26px; }
.vbar .c { margin-left: 6px; width: 10px; border-width: 4px 5px 0; border-top: 6px solid #444; border-left-color: transparent; border-right-color: transparent; }
.vbar .c7 { margin-left: 7px; }
.m6 { margin-left: 6px; }
.m8 { margin-left: 8px; }
.m9 { margin-left: 9px; }
.m10 { margin-left: 10px; }
.m12 { margin-left: 12px; }
.m13 { margin-left: 13px; }
.swatch { display: block; flex: none; width: 25px; }
.sw-k { height: 16px; background: #000; border: 1px solid #666; margin-left: 14px; }
.sw-b { height: 24px; background: #bee5f5; border: 1px solid #111; margin-left: 10px; }
.layer { width: 172px; height: 30px; margin-left: 7px; flex: none; background: #fff; border: 1px solid #b8bec4; display: flex; align-items: center; padding: 0 7px 0 14px; font-size: 18px; color: #222; }
.layer span { flex: 1; margin-left: 13px; }
.bulb { width: 10px; height: 18px; margin-right: 6px; }
.sun { width: 14px; height: 18px; }
```
